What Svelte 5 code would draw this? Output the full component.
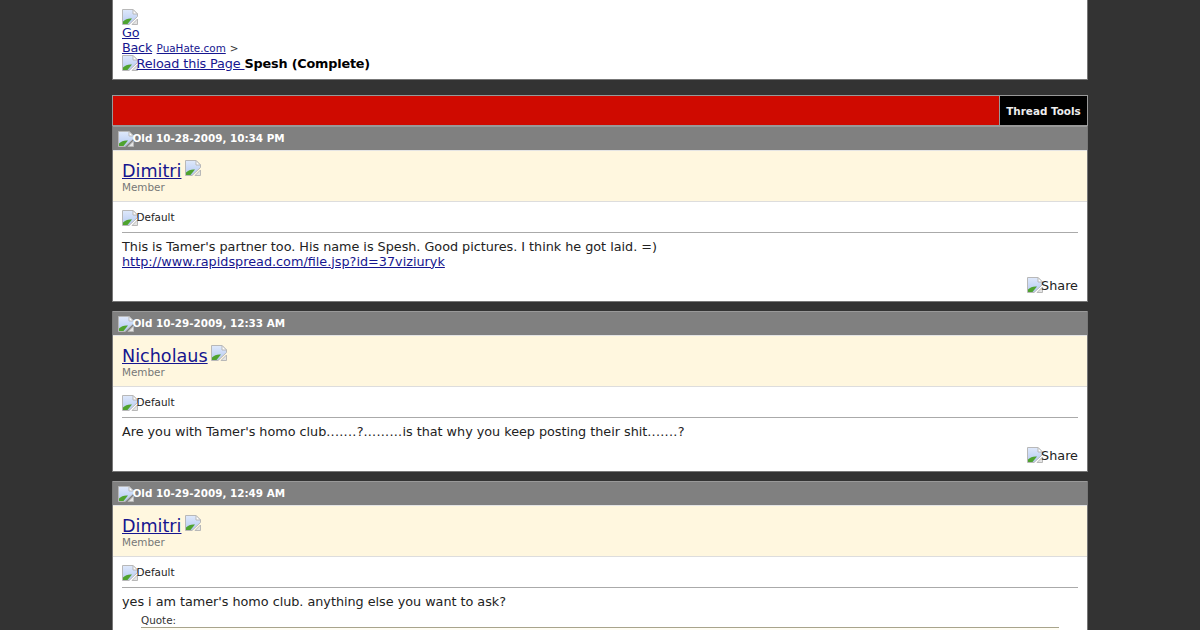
<script>
	const posts = [
		{
			date: '10-28-2009, 10:34 PM',
			user: 'Dimitri',
			text: "This is Tamer's partner too. His name is Spesh. Good pictures. I think he got laid. =)",
			link: 'http://www.rapidspread.com/file.jsp?id=37viziuryk',
			share: true
		},
		{
			date: '10-29-2009, 12:33 AM',
			user: 'Nicholaus',
			text: "Are you with Tamer's homo club.......?.........is that why you keep posting their shit.......?",
			share: true
		},
		{
			date: '10-29-2009, 12:49 AM',
			user: 'Dimitri',
			text: "yes i am tamer's homo club. anything else you want to ask?",
			quote: true
		}
	];

	// runs of dots are set a little wider than the letters around them
	const parts = (text) => text.split(/(\.{3,})/);
</script>

{#snippet broken()}
	<svg class="broken" width="16" height="16" viewBox="0 0 16 16">
		<defs>
			<linearGradient id="sky" x1="0" y1="0" x2="0" y2="1">
				<stop offset="0" stop-color="#dfe9fb" />
				<stop offset="1" stop-color="#b4c9f2" />
			</linearGradient>
		</defs>
		<path d="M0.5 0.5H11L15.5 5V7.5L7 15.5H0.5Z" fill="url(#sky)" stroke="#b8b8b8" />
		<path d="M11 0.5V5H15.5Z" fill="#fff" stroke="#b8b8b8" />
		<path d="M1 15V12.5C3.5 10 6.5 9 10 9.5L5.5 15Z" fill="#4fa32f" />
		<path d="M15.5 10V15.5H10Z" fill="#e4e4e4" stroke="#b8b8b8" />
	</svg>
{/snippet}

<div class="page">
	<header class="nav">
		<a class="back" href="#top">{@render broken()}<br />Go<br />Back</a>
		<a class="home" href="#top">PuaHate.com</a>
		<span class="sep">&gt;</span><br />
		<a class="reload" href="#top">{@render broken()}Reload this Page&nbsp;</a><strong>Spesh (Complete)</strong>
	</header>

	<div class="toolbar">
		<div class="red"></div>
		<div class="tools">Thread Tools</div>
	</div>

	{#each posts as post, i}
		<article class="post" class:first={i === 0}>
			<div class="date">{@render broken()}Old {post.date}</div>
			<div class="author">
				<div class="name"><a href="#top">{post.user}</a> {@render broken()}</div>
				<div class="role">Member</div>
			</div>
			<div class="body">
				<div class="icon">{@render broken()}Default</div>
				<hr />
				<div class="message">
					{#each parts(post.text) as part, n}{#if n % 2}<span class="dots">{part}</span>{:else}{part}{/if}{/each}
					{#if post.link}<br /><a href={post.link}>{post.link}</a>{/if}
				</div>
				{#if post.quote}
					<div class="quote">
						<div class="quote-label">Quote:</div>
						<div class="quote-box"></div>
					</div>
				{/if}
				{#if post.share}
					<div class="share">{@render broken()}Share</div>
				{/if}
			</div>
		</article>
	{/each}
</div>

<style>
	:global(body) {
		background: #333;
		font-family: "DejaVu Sans", sans-serif;
		font-size: 12.8px;
		color: #222;
	}

	a {
		color: #16168f;
	}

	.page {
		width: 976px;
		margin-left: 112px;
		height: 630px;
		overflow: hidden;
	}

	.broken {
		display: inline-block;
		vertical-align: text-top;
		margin: -1px -1.5px -1px 0;
	}

	.nav {
		box-sizing: border-box;
		height: 80px;
		padding: 10px 9px 0;
		background: #fff;
		border: 1px solid #777;
		border-top: 0;
		line-height: 15px;
	}

	.nav .broken {
		margin-bottom: 0;
	}

	.back {
		display: inline-block;
		width: 30.5px;
		letter-spacing: -0.25px;
	}

	.reload {
		letter-spacing: -0.12px;
	}

	.home,
	.sep {
		font-size: 10.4px;
	}

	.sep {
		color: #333;
	}

	.nav strong {
		color: #000;
		letter-spacing: -0.19px;
	}

	.toolbar {
		display: flex;
		box-sizing: border-box;
		height: 31px;
		margin-top: 15px;
		border: 1px solid #999;
	}

	.red {
		flex: 1;
		background: #cf0a00;
	}

	.tools {
		width: 87px;
		background: #000;
		border-left: 1px solid #999;
		color: #eee;
		font-size: 10.4px;
		font-weight: bold;
		line-height: 30px;
		text-align: center;
	}

	.post {
		margin-top: 9.5px;
		background: #fff;
		border: 1px solid #777;
		border-top: 0;
	}

	.post.first {
		margin-top: 0;
	}

	.date {
		box-sizing: border-box;
		height: 24px;
		padding-left: 5px;
		background: #808080;
		border-top: 1px solid #999;
		color: #fff;
		font-size: 10.4px;
		font-weight: bold;
		line-height: 22px;
	}

	.date .broken {
		margin-top: -1px;
	}

	.author {
		box-sizing: border-box;
		height: 51.6px;
		padding: 8.5px 9px 0;
		background: #fff7df;
		border-top: 1px solid #e4e4e4;
		border-bottom: 1px solid #ddd;
	}

	.name {
		font-size: 17.6px;
		line-height: 22px;
	}

	.name .broken {
		margin-left: -2px;
	}

	.role {
		font-size: 10.4px;
		line-height: 11px;
		color: #777;
	}

	.body {
		padding: 8.3px 9px 7.5px;
	}

	.icon {
		height: 21.7px;
		font-size: 10.4px;
		line-height: 14px;
	}

	hr {
		margin: 0 0 6px;
		border: 0;
		border-top: 1px solid #aaa;
	}

	.message {
		line-height: 15px;
		letter-spacing: -0.025px;
	}

	.message a {
		letter-spacing: 0;
	}

	.dots {
		letter-spacing: 0.27px;
	}

	.quote {
		margin: 4px 19px 0;
	}

	.quote-label {
		font-size: 10.4px;
		line-height: 14px;
		color: #333;
	}

	.quote-box {
		height: 20px;
		background: #fffdf4;
		border-top: 1px solid #a8a48c;
	}

	.share {
		height: 15px;
		margin-top: 9.5px;
		line-height: 15px;
		text-align: right;
	}
</style>
